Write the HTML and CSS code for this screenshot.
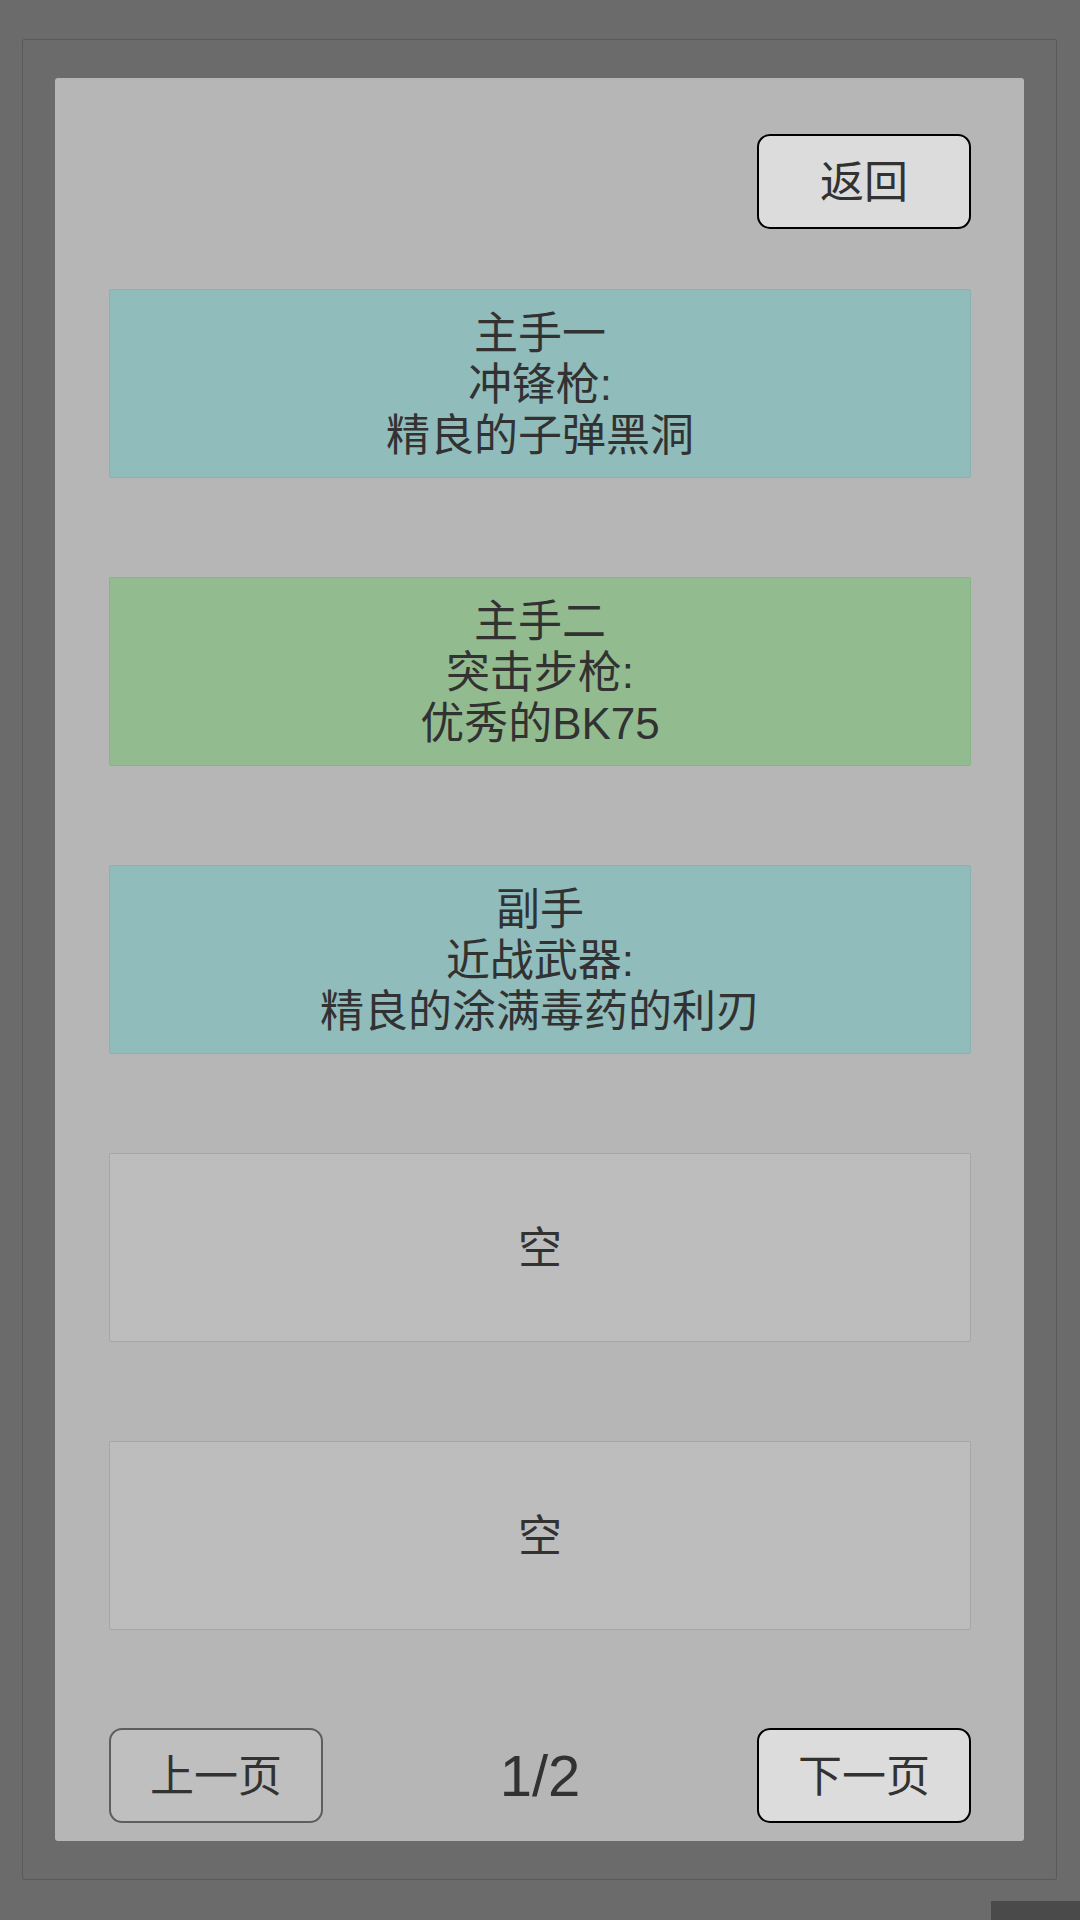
FILE: index.html
```html
<!DOCTYPE html>
<html lang="zh-CN">
<head>
<meta charset="utf-8">
<title>装备</title>
<link rel="stylesheet" href="styles.css">
</head>
<body>
<div class="outer">
  <div class="panel">
    <div class="header">
      <button class="btn btn-active">返回</button>
    </div>
    <div class="slots">
      <div class="slot slot-teal">
        <span>主手一</span>
        <span>冲锋枪:</span>
        <span>精良的子弹黑洞</span>
      </div>
      <div class="slot slot-green">
        <span>主手二</span>
        <span>突击步枪:</span>
        <span>优秀的BK75</span>
      </div>
      <div class="slot slot-teal">
        <span>副手</span>
        <span>近战武器:</span>
        <span>精良的涂满毒药的利刃</span>
      </div>
      <div class="slot slot-empty">
        <span>空</span>
      </div>
      <div class="slot slot-empty">
        <span>空</span>
      </div>
    </div>
    <div class="pager">
      <button class="btn btn-disabled">上一页</button>
      <span class="page-num">1/2</span>
      <button class="btn btn-active">下一页</button>
    </div>
  </div>
</div>
<div class="corner"></div>
</body>
</html>
```

FILE: styles.css
```css
html, body {
  margin: 0;
  padding: 0;
}
body {
  width: 1080px;
  height: 1920px;
  overflow: hidden;
  background: #6b6b6b;
  font-family: "Liberation Sans", "Noto Sans CJK SC", sans-serif;
  color: #323232;
  position: relative;
}
.outer {
  box-sizing: border-box;
  margin: 39px 0 0 22px;
  width: 1035px;
  height: 1841px;
  border: 1px solid #5a5a5a;
  border-radius: 2px;
  padding: 38px 32px 38px 32px;
  background: #6b6b6b;
}
.panel {
  box-sizing: border-box;
  width: 969px;
  height: 1763px;
  background: #b6b6b6;
  border-radius: 3px;
  padding: 56px 53px 18px 54px;
  display: flex;
  flex-direction: column;
}
.header {
  display: flex;
  justify-content: flex-end;
}
.btn {
  box-sizing: border-box;
  width: 214px;
  height: 95px;
  border-radius: 13px;
  font-family: "Liberation Sans", "Noto Sans CJK SC", sans-serif;
  font-size: 44px;
  color: #323232;
  padding: 2px 0 0 0;
  display: flex;
  align-items: center;
  justify-content: center;
  line-height: 1;
}
.btn-active {
  background: #dcdcdc;
  border: 2px solid #000000;
}
.btn-disabled {
  background: #bfbfbf;
  border: 2px solid #5e5e5e;
}
.slots {
  margin-top: 60px;
  display: flex;
  flex-direction: column;
  gap: 99px;
}
.slot {
  box-sizing: border-box;
  height: 189px;
  border-radius: 2px;
  padding-top: 2px;
  display: flex;
  flex-direction: column;
  align-items: center;
  justify-content: center;
  font-size: 44px;
  line-height: 51px;
}
.slot-teal {
  background: #90bcbb;
  border: 1px solid #88b3b2;
}
.slot-green {
  background: #92bc90;
  border: 1px solid #8ab388;
}
.slot-empty {
  background: #bdbdbd;
  border: 1px solid #a6a6a6;
}
.pager {
  margin-top: 98px;
  display: flex;
  justify-content: space-between;
  align-items: center;
}
.page-num {
  font-size: 58px;
  line-height: 1;
}
.corner {
  position: absolute;
  left: 991px;
  top: 1901px;
  width: 89px;
  height: 19px;
  background: #4a4a4a;
}
```
